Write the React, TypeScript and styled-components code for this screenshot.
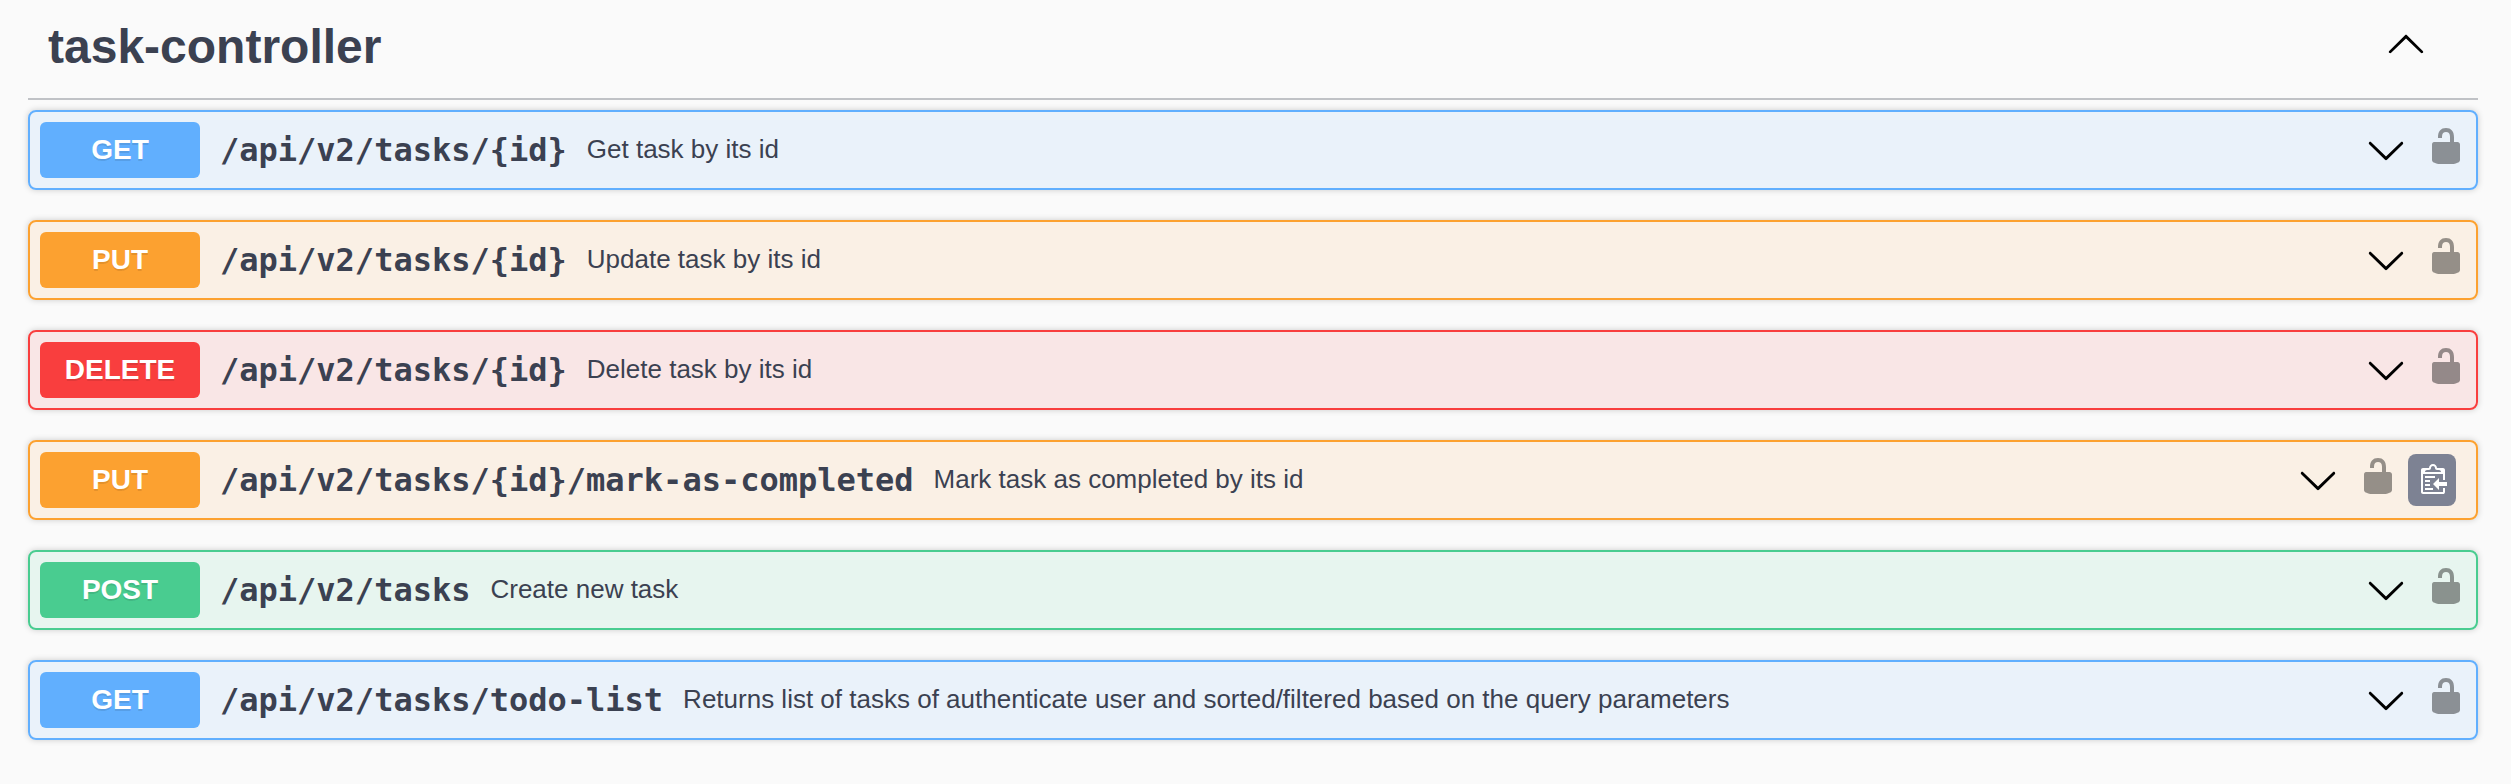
import React from 'react';
import styled, { createGlobalStyle } from 'styled-components';

type Method = 'GET' | 'PUT' | 'DELETE' | 'POST';

interface Operation {
  method: Method;
  path: string;
  summary: string;
  copyable?: boolean;
}

const operations: Operation[] = [
  { method: 'GET', path: '/api/v2/tasks/{id}', summary: 'Get task by its id' },
  { method: 'PUT', path: '/api/v2/tasks/{id}', summary: 'Update task by its id' },
  { method: 'DELETE', path: '/api/v2/tasks/{id}', summary: 'Delete task by its id' },
  {
    method: 'PUT',
    path: '/api/v2/tasks/{id}/mark-as-completed',
    summary: 'Mark task as completed by its id',
    copyable: true,
  },
  { method: 'POST', path: '/api/v2/tasks', summary: 'Create new task' },
  {
    method: 'GET',
    path: '/api/v2/tasks/todo-list',
    summary: 'Returns list of tasks of authenticate user and sorted/filtered based on the query parameters',
  },
];

const methodRgb: Record<Method, string> = {
  GET: '97, 175, 254',
  PUT: '252, 161, 48',
  DELETE: '249, 62, 62',
  POST: '73, 204, 144',
};

const GlobalStyle = createGlobalStyle`
  *, *::before, *::after { box-sizing: border-box; }
  body {
    margin: 0;
    background: #fafafa;
    color: #3b4151;
    font-family: "Liberation Sans", Arial, sans-serif;
  }
`;

const Page = styled.main`
  min-height: 100vh;
  padding: 0 33px 0 28px;
`;

const TagHeader = styled.header`
  display: flex;
  align-items: center;
  justify-content: space-between;
  height: 100px;
  margin-bottom: 10px;
  padding: 0 52px 4px 20px;
  border-bottom: 2px solid rgba(59, 65, 81, 0.3);
`;

const TagTitle = styled.h3`
  margin: 0;
  font-size: 48px;
  font-weight: 700;
  line-height: 56px;
`;

const IconButton = styled.button<{ $raised?: boolean }>`
  display: flex;
  flex: none;
  padding: 0;
  margin-bottom: ${({ $raised }) => ($raised ? '8px' : '0')};
  border: none;
  background: none;
  color: #000;
  cursor: pointer;
`;

const OperationList = styled.div`
  display: flex;
  flex-direction: column;
  gap: 30px;
`;

const OperationRow = styled.div<{ $rgb: string }>`
  display: flex;
  align-items: center;
  height: 80px;
  padding: 0 10px;
  border: 2px solid rgb(${({ $rgb }) => $rgb});
  border-radius: 8px;
  background: rgba(${({ $rgb }) => $rgb}, 0.1);
  box-shadow: 0 0 6px rgba(0, 0, 0, 0.19);
`;

const MethodBadge = styled.span<{ $rgb: string }>`
  flex: none;
  width: 160px;
  height: 56px;
  border-radius: 6px;
  background: rgb(${({ $rgb }) => $rgb});
  color: #fff;
  font-size: 28px;
  font-weight: 700;
  line-height: 56px;
  text-align: center;
  text-shadow: 0 2px 0 rgba(0, 0, 0, 0.1);
`;

const Path = styled.span`
  flex: none;
  padding: 0 20px;
  font-family: "DejaVu Sans Mono", monospace;
  font-size: 32px;
  font-weight: 600;
  white-space: nowrap;
`;

const Summary = styled.span`
  flex: 1;
  padding-bottom: 2px;
  font-size: 26px;
  line-height: 30px;
  white-space: nowrap;
`;

const Actions = styled.div`
  display: flex;
  align-items: center;
`;

const LockButton = styled(IconButton)`
  margin-left: 20px;
`;

const CopyButton = styled.button`
  display: flex;
  align-items: center;
  width: 48px;
  height: 52px;
  margin: 0 10px;
  padding: 0 0 0 9px;
  border: none;
  border-radius: 8px;
  background: #7d8293;
  cursor: pointer;
`;

const ArrowUp = () => (
  <svg width="40" height="40" viewBox="0 0 20 20" fill="currentColor">
    <path d="M17.418 14.908C17.69 15.176 18.127 15.176 18.397 14.908C18.667 14.64 18.668 14.207 18.397 13.939L10.489 6.109C10.219 5.841 9.782 5.841 9.51 6.109L1.602 13.939C1.332 14.207 1.332 14.64 1.602 14.908C1.873 15.176 2.311 15.176 2.581 14.908L10 7.767L17.418 14.908Z" />
  </svg>
);

const ArrowDown = () => (
  <svg width="40" height="40" viewBox="0 0 20 20" fill="currentColor">
    <path d="M17.418 6.109c.272-.268.709-.268.979 0s.271.701 0 .969l-7.908 7.83c-.27.268-.707.268-.979 0l-7.908-7.83c-.27-.268-.27-.701 0-.969.271-.268.709-.268.979 0L10 13.25l7.418-7.141z" />
  </svg>
);

const Unlocked = () => (
  <svg width="40" height="40" viewBox="0 0 20 20" fill="currentColor" opacity="0.4">
    <path d="M15.8 8H14V5.6C14 2.703 12.665 1 10 1 7.334 1 6 2.703 6 5.6V6h2v-.801C8 3.754 8.797 3 10 3c1.203 0 2 .754 2 2.199V8H4c-.553 0-1 .646-1 1.199V17c0 .549.428 1.139.951 1.307l1.197.387C5.672 18.861 6.55 19 7.1 19h5.8c.549 0 1.428-.139 1.951-.307l1.196-.387c.524-.167.953-.757.953-1.306V9.199C17 8.646 16.352 8 15.8 8z" />
  </svg>
);

const Clipboard = () => (
  <svg width="30" height="32" viewBox="0 0 15 16" fill="#fff">
    <path
      transform="translate(2 -1)"
      fillRule="evenodd"
      d="M2 13h4v1H2v-1zm5-6H2v1h5V7zm2 3V8l-3 3 3 3v-2h5v-2H9zM4.5 9H2v1h2.5V9zM2 12h2.5v-1H2v1zm9 1h1v2c-.02.28-.11.52-.3.7-.19.18-.42.28-.7.3H1c-.55 0-1-.45-1-1V4c0-.55.45-1 1-1h3c0-1.11.89-2 2-2 1.11 0 2 .89 2 2h3c.55 0 1 .45 1 1v5h-1V6H1v9h10v-2zM2 5h8c0-.55-.45-1-1-1H8c-.55 0-1-.45-1-1s-.45-1-1-1-1 .45-1 1-.45 1-1 1H3c-.55 0-1 .45-1 1z"
    />
  </svg>
);

const OperationItem = ({ method, path, summary, copyable }: Operation) => {
  const rgb = methodRgb[method];
  return (
    <OperationRow $rgb={rgb}>
      <MethodBadge $rgb={rgb}>{method}</MethodBadge>
      <Path>{path}</Path>
      <Summary>{summary}</Summary>
      <Actions>
        <IconButton aria-label="Expand operation">
          <ArrowDown />
        </IconButton>
        <LockButton $raised aria-label="Authorize">
          <Unlocked />
        </LockButton>
        {copyable && (
          <CopyButton aria-label="Copy path">
            <Clipboard />
          </CopyButton>
        )}
      </Actions>
    </OperationRow>
  );
};

export default function App() {
  return (
    <>
      <GlobalStyle />
      <Page>
        <TagHeader>
          <TagTitle>task-controller</TagTitle>
          <IconButton $raised aria-label="Collapse section">
            <ArrowUp />
          </IconButton>
        </TagHeader>
        <OperationList>
          {operations.map((operation) => (
            <OperationItem key={operation.method + operation.path} {...operation} />
          ))}
        </OperationList>
      </Page>
    </>
  );
}
